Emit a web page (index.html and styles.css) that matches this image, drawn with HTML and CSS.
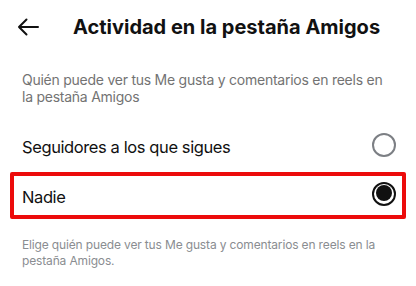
FILE: index.html
```html
<!DOCTYPE html>
<html lang="es">
<head>
<meta charset="utf-8">
<link rel="stylesheet" href="styles.css">
</head>
<body>
<div class="screen">
  <header class="header">
    <svg class="back" width="22" height="18" viewBox="0 0 22 18" aria-hidden="true">
      <path d="M21 9H2M9.5 1.5L2 9l7.5 7.5" fill="none" stroke="#111" stroke-width="2" stroke-linecap="round" stroke-linejoin="round"/>
    </svg>
    <h1 class="title">Actividad en la pestaña Amigos</h1>
  </header>
  <p class="subtitle">Quién puede ver tus Me gusta y comentarios en reels en la pestaña Amigos</p>
  <div class="options">
    <div class="option">
      <span class="label">Seguidores a los que sigues</span>
      <span class="radio"></span>
    </div>
    <div class="option selected">
      <span class="label">Nadie</span>
      <span class="radio checked"></span>
    </div>
  </div>
  <p class="footnote">Elige quién puede ver tus Me gusta y comentarios en reels en la pestaña Amigos.</p>
</div>
</body>
</html>
```

FILE: styles.css
```css
* { box-sizing: border-box; }
html, body { margin: 0; padding: 0; background: #fff; }
body { font-family: Inter, "Noto Sans", sans-serif; color: #111; }

.screen { width: 416px; height: 286px; overflow: hidden; }

.header {
  display: flex;
  align-items: center;
  height: 54px;
  padding-left: 17px;
}
.back { flex: none; display: block; }
.title {
  margin: 0 0 0 34px;
  font-size: 20px;
  font-weight: 700;
  line-height: 24px;
  color: #111;
}

.subtitle {
  margin: 17px 0 0;
  padding: 0 28px 0 22px;
  font-size: 14px;
  letter-spacing: -0.25px;
  line-height: 17px;
  color: #737373;
}

.options { margin-top: 15px; }
.option {
  display: flex;
  align-items: center;
  justify-content: space-between;
  height: 48px;
  padding: 2px 20px 0 22px;
}
.option.selected {
  margin: 4px 10px 0;
  height: 47px;
  border: 4px solid #ec0b0b;
  border-radius: 2px;
  padding: 0 6px 0 8px;
}
.label {
  font-size: 16.5px;
  letter-spacing: -0.4px;
  line-height: 20px;
  color: #111;
  padding-top: 3px;
}
.radio {
  width: 24px;
  height: 24px;
  border-radius: 50%;
  border: 2px solid #7c7f84;
  flex: none;
}
.radio.checked {
  border: 2.5px solid #111;
  position: relative;
  margin-top: -4px;
}
.radio.checked::after {
  content: "";
  position: absolute;
  left: 1.5px;
  top: 1.5px;
  width: 16px;
  height: 16px;
  border-radius: 50%;
  background: #111;
}

.footnote {
  margin: 18px 0 0;
  padding: 0 28px 0 22px;
  font-size: 12px;
  letter-spacing: -0.15px;
  line-height: 15.5px;
  color: #8a8d91;
}
```
